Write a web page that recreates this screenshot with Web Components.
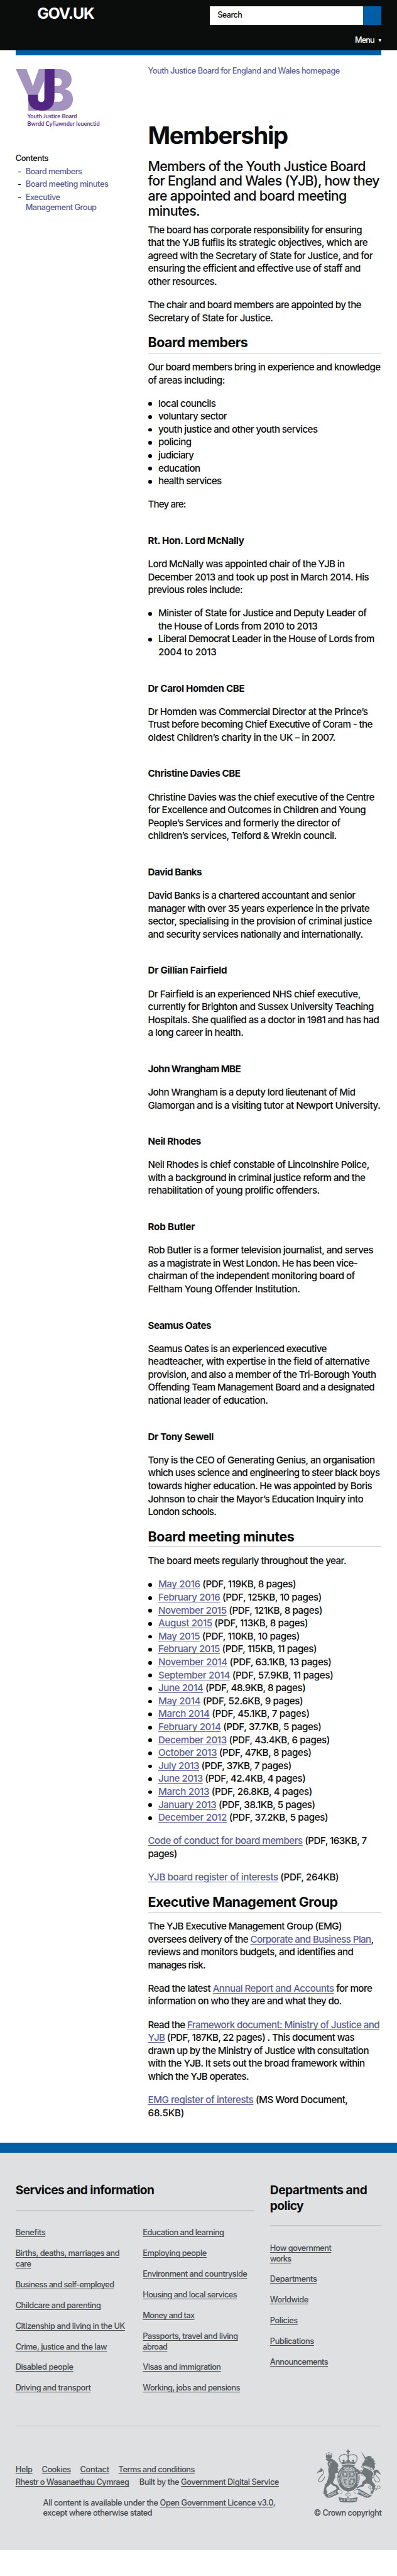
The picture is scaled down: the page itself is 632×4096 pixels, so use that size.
<!DOCTYPE html>
<html lang="en">
<head>
<meta charset="utf-8">
<title>Membership - Youth Justice Board for England and Wales - GOV.UK</title>
<style>
/* 1rem = 10 design pixels */
html { font-size: 8.2348px; }
body { margin: 0; background: #fff; color: #0b0c0c; font-family: Inter, "Noto Sans", sans-serif; font-weight: 450; overflow-x: hidden; }
main { display: grid; grid-template-columns: 25.6rem 1fr; padding: 0 3rem 4.5rem; }
article { display: block; padding-top: 2.02rem; }
</style>
</head>
<body>
<gov-header></gov-header>
<main>
  <org-side></org-side>
  <article>
    <page-intro></page-intro>
    <gov-speak></gov-speak>
  </article>
</main>
<gov-footer></gov-footer>

<script>
const SCALE = 632 / 768;

/* One line of copy, tracked to a set measure (design pixels). */
class FitLine extends HTMLElement {
  connectedCallback() {
    if (!this.shadowRoot) {
      this.attachShadow({ mode: 'open' }).innerHTML = `<style>
        :host{display:block;white-space:nowrap}
        ::slotted(a){color:var(--link,#5c5f98);text-decoration:underline;text-decoration-thickness:1px;text-underline-offset:.13em;text-decoration-skip-ink:none}
        </style><span><slot></slot></span>`;
    }
    const span = this.shadowRoot.querySelector('span');
    const want = parseFloat(this.getAttribute('w')) * SCALE;
    const got = span.getBoundingClientRect().width;
    const n = this.textContent.length;
    if (want && got) span.style.letterSpacing = ((want - got) / n).toFixed(4) + 'px';
  }
}
customElements.define('fit-line', FitLine);

const line = ([w, t]) => `<fit-line w="${w}">${t}</fit-line>`;
const A = t => `<a>${t}</a>`;

customElements.define('gov-header', class extends HTMLElement {
  connectedCallback() {
    this.attachShadow({ mode: 'open' }).innerHTML = `<style>
      :host{display:block;color:#fff}
      .bar{background:#0b0c0c;height:9.7rem;padding:0 3rem;display:grid;grid-template-columns:1fr 33.2rem;align-items:start}
      .brand{padding:1.1rem 0 0 4.2rem;font:700 3rem/3rem Inter,sans-serif}
      form{display:grid;grid-template-columns:29.6rem 3.5rem;gap:.1rem;height:3.6rem;margin-top:1.2rem}
      .q{background:#fff;color:#0b0c0c;padding:.75rem 0 0 1.5rem;font-size:1.55rem;line-height:2rem}
      .go{background:#005ea5}
      .right{display:flex;flex-direction:column}
      .menu{display:flex;justify-content:flex-end;gap:.7rem;align-items:center;font-size:1.55rem;line-height:2rem;margin-top:2rem;font-weight:500}
      .menu svg{width:.7rem;height:.6rem}
      .rule{height:1rem;background:#005ea5;margin:0 3rem}
      </style>
      <div class="bar"><div class="brand"><fit-line w="110">GOV.UK</fit-line></div>
        <div class="right"><form><div class="q"><fit-line w="47.5">Search</fit-line></div><div class="go"></div></form>
        <div class="menu"><fit-line w="37.5">Menu</fit-line><svg viewBox="0 0 7 6"><path d="M.5 0h6L3.5 6z" fill="#fff"/></svg></div></div>
      </div><div class="rule"></div>`;
  }
});

customElements.define('org-side', class extends HTMLElement {
  connectedCallback() {
    const nav = [[[109,'Board members']],[[160,'Board meeting minutes']],[[66.6,'Executive'],[137,'Management Group']]];
    this.attachShadow({ mode: 'open' }).innerHTML = `<style>
      :host{display:block;padding-top:2.7rem}
      svg{display:block;width:11.2rem;height:8.1rem;overflow:visible}
      .name{margin-left:2.28rem;color:#522583;font:600 1.12rem/1.35rem Lato,"Noto Sans",sans-serif;padding-top:.3rem}
      nav{font-size:1.55rem;line-height:2rem;padding-top:5.12rem}
      ul{list-style:none;margin:.53rem 0 0;padding:0;display:flex;flex-direction:column;gap:.5rem;color:#5c5f98}
      li{display:grid;grid-template-columns:1.55rem 1fr;padding-left:.4rem}
      li>i{font-style:normal;color:#0b0c0c}
      </style>
      <svg viewBox="0 0 112 81" font-family="Inter" font-weight="900" font-size="100">
        <text fill="#a593bf" data-box="0 0 66 80">Y</text>
        <text fill="#a593bf" data-box="54 0 111 80">B</text>
        <text fill="#522583" data-box="23 0 75 80.3">J</text>
      </svg>
      <div class="name"><fit-line w="96">Youth Justice Board</fit-line><fit-line w="140">Bwrdd Cyfiawnder Ieuenctid</fit-line></div>
      <nav><fit-line w="63.7">Contents</fit-line><ul>${nav.map(n=>`<li><i>-</i><div>${n.map(line).join('')}</div></li>`).join('')}</ul></nav>`;
    /* stretch each initial so its ink fills its box */
    const c = document.createElement('canvas').getContext('2d');
    c.font = '900 100px Inter';
    for (const t of this.shadowRoot.querySelectorAll('text')) {
      const [x0,y0,x1,y1] = t.dataset.box.split(' ').map(Number);
      const m = c.measureText(t.textContent);
      const l = -m.actualBoundingBoxLeft, r = m.actualBoundingBoxRight, a = m.actualBoundingBoxAscent, d = m.actualBoundingBoxDescent;
      const sx = (x1-x0)/(r-l), sy = (y1-y0)/(a+d);
      t.setAttribute('transform', `translate(${x0-l*sx} ${y0+a*sy}) scale(${sx} ${sy})`);
    }
  }
});

customElements.define('page-intro', class extends HTMLElement {
  connectedCallback() {
    this.attachShadow({ mode: 'open' }).innerHTML = `<style>
      :host{display:block}
      .crumb{font-size:1.55rem;line-height:2rem;color:#5c5f98}
      h1{font-size:4.65rem;line-height:5rem;margin:8.95rem 0 2.01rem;font-weight:700}
      .lead{font-size:2.6rem;line-height:2.89rem;margin:0 0 .96rem;position:static}
      </style>
      <div class="crumb"><fit-line w="371">Youth Justice Board for England and Wales homepage</fit-line></div>
      <h1><fit-line w="270">Membership</fit-line></h1>
      <div class="lead">${[[420.7,'Members of the Youth Justice Board'],[447.7,'for England and Wales (YJB), how they'],[384,'are appointed and board meeting'],[100,'minutes.']].map(line).join('')}</div>`;
  }
});

/* Body copy: blocks of [tag, ...lines] */
const BODY = [
 ['p',[413.9,'The board has corporate responsibility for ensuring'],[425,'that the YJB fulfils its strategic objectives, which are'],[434.4,'agreed with the Secretary of State for Justice, and for'],[411,'ensuring the efficient and effective use of staff and'],[133.2,'other resources.']],
 ['p',[412.4,'The chair and board members are appointed by the'],[241.5,'Secretary of State for Justice.']],
 ['h2',[193,'Board members']],
 ['p',[449.6,'Our board members bring in experience and knowledge'],[148.4,'of areas including:']],
 ['ul',[[111,'local councils']],[[132.7,'voluntary sector']],[[308,'youth justice and other youth services']],[[64,'policing']],[[68.6,'judiciary']],[[81,'education']],[[122,'health services']]],
 ['p',[73,'They are:']],
 ['h3',[186,'Rt. Hon. Lord McNally']],
 ['p',[380.3,'Lord McNally was appointed chair of the YJB in'],[427.3,'December 2013 and took up post in March 2014. His'],[183,'previous roles include:']],
 ['ul',[[402.7,'Minister of State for Justice and Deputy Leader of'],[307.7,'the House of Lords from 2010 to 2013']],[[418,'Liberal Democrat Leader in the House of Lords from'],[112.3,'2004 to 2013']]],
 ['h3',[187,'Dr Carol Homden CBE']],
 ['p',[425.3,'Dr Homden was Commercial Director at the Prince’s'],[434,'Trust before becoming Chief Executive of Coram - the'],[362.7,'oldest Children’s charity in the UK – in 2007.']],
 ['h3',[178.7,'Christine Davies CBE']],
 ['p',[438,'Christine Davies was the chief executive of the Centre'],[421.3,'for Excellence and Outcomes in Children and Young'],[372,'People’s Services and formerly the director of'],[364.7,'children’s services, Telford &amp; Wrekin council.']],
 ['h3',[104,'David Banks']],
 ['p',[401,'David Banks is a chartered accountant and senior'],[428.3,'manager with over 35 years experience in the private'],[433,'sector, specialising in the provision of criminal justice'],[415.7,'and security services nationally and internationally.']],
 ['h3',[153,'Dr Gillian Fairfield']],
 ['p',[411,'Dr Fairfield is an experienced NHS chief executive,'],[436.7,'currently for Brighton and Sussex University Teaching'],[447,'Hospitals. She qualified as a doctor in 1981 and has had'],[184.3,'a long career in health.']],
 ['h3',[179.3,'John Wrangham MBE']],
 ['p',[401,'John Wrangham is a deputy lord lieutenant of Mid'],[449.3,'Glamorgan and is a visiting tutor at Newport University.']],
 ['h3',[102.7,'Neil Rhodes']],
 ['p',[428,'Neil Rhodes is chief constable of Lincolnshire Police,'],[420.3,'with a background in criminal justice reform and the'],[332,'rehabilitation of young prolific offenders.']],
 ['h3',[91,'Rob Butler']],
 ['p',[435.7,'Rob Butler is a former television journalist, and serves'],[405.3,'as a magistrate in West London. He has been vice-'],[400,'chairman of the independent monitoring board of'],[294,'Feltham Young Offender Institution.']],
 ['h3',[122,'Seamus Oates']],
 ['p',[345.3,'Seamus Oates is an experienced executive'],[428.7,'headteacher, with expertise in the field of alternative'],[441,'provision, and also a member of the Tri-Borough Youth'],[438,'Offending Team Management Board and a designated'],[232,'national leader of education.']],
 ['h3',[127,'Dr Tony Sewell']],
 ['p',[438.7,'Tony is the CEO of Generating Genius, an organisation'],[448.3,'which uses science and engineering to steer black boys'],[433.3,'towards higher education. He was appointed by Boris'],[416.3,'Johnson to chair the Mayor’s Education Inquiry into'],[132,'London schools.']],
 ['h2',[283,'Board meeting minutes']],
 ['p',[383.3,'The board meets regularly throughout the year.']],
 ['ul',...[[937,'May 2016','119KB, 8'],[1085,'February 2016','125KB, 10'],[1090,'November 2015','121KB, 8'],[1006,'August 2015','113KB, 8'],[958,'May 2015','110KB, 10'],[1057,'February 2015','115KB, 11'],[1142,'November 2014','63.1KB, 13'],[1153,'September 2014','57.9KB, 11'],[992,'June 2014','48.9KB, 8'],[977,'May 2014','52.6KB, 9'],[1015,'March 2014','45.1KB, 7'],[1084,'February 2014','37.7KB, 5'],[1133,'December 2013','43.4KB, 6'],[1026,'October 2013','47KB, 8'],[910,'July 2013','37KB, 7'],[992,'June 2013','42.4KB, 4'],[1031,'March 2013','26.8KB, 4'],[1048,'January 2013','38.1KB, 5'],[1123,'December 2012','37.2KB, 5']].map(([e,n,s])=>[[(e-138)/3,`${A(n)} (PDF, ${s} pages)`]])],
 ['p',[423,A('Code of conduct for board members')+' (PDF, 163KB, 7'],[56,'pages)']],
 ['p',[369,A('YJB board register of interests')+' (PDF, 264KB)']],
 ['h2',[367,'Executive Management Group']],
 ['p',[374.7,'The YJB Executive Management Group (EMG)'],[436.3,'oversees delivery of the '+A('Corporate and Business Plan')+','],[397,'reviews and monitors budgets, and identifies and'],[111,'manages risk.']],
 ['p',[433.7,'Read the latest '+A('Annual Report and Accounts')+' for more'],[374.7,'information on who they are and what they do.']],
 ['p',[447.7,'Read the '+A('Framework document: Ministry of Justice and')],[399.3,A('YJB')+' (PDF, 187KB, 22 pages) . This document was'],[427,'drawn up by the Ministry of Justice with consultation'],[419.3,'with the YJB. It sets out the broad framework within'],[195,'which the YJB operates.']],
 ['p',[386.3,A('EMG register of interests')+' (MS Word Document,'],[70.3,'68.5KB)']]
];

customElements.define('gov-speak', class extends HTMLElement {
  connectedCallback() {
    this.attachShadow({ mode: 'open' }).innerHTML = `<style>
      :host{display:flex;flex-direction:column;font-size:1.84rem;line-height:2.5rem}
      p,ul,h2,h3{margin:0;font-size:1.84rem}
      p+p,p+ul,ul+p,h3+p{margin-top:2rem}
      h3{margin-top:4.5rem;font-weight:700}
      h2{margin:1.96rem 0 1.5rem;padding-bottom:.44rem;border-bottom:1px solid #bfc1c3;font-size:2.6rem;line-height:2.98rem;font-weight:700}
      ul{list-style:none;padding:0}
      li{display:grid;grid-template-columns:2rem 1fr}
      li::before{content:"";width:.7rem;height:.7rem;border-radius:50%;background:#0b0c0c;margin:.95rem 0 0 .05rem}
      </style>` + BODY.map(([tag, ...rows]) => `<${tag}>${tag === 'ul'
        ? rows.map(r => `<li><div>${r.map(line).join('')}</div></li>`).join('')
        : rows.map(line).join('')}</${tag}>`).join('');
  }
});

customElements.define('link-column', class extends HTMLElement {
  connectedCallback() {
    const items = JSON.parse(this.getAttribute('items'));
    this.attachShadow({ mode: 'open' }).innerHTML = `<style>
      :host{display:flex;flex-direction:column;gap:2rem;font-size:1.55rem;line-height:2rem}
      </style>` + items.map(i => `<div>${i.map(([w,t]) => line([w, A(t)])).join('')}</div>`).join('');
  }
});

customElements.define('royal-crest', class extends HTMLElement {
  connectedCallback() {
    this.attachShadow({ mode: 'open' }).innerHTML = `<style>:host{display:block}svg{display:block;width:100%;height:100%;overflow:visible}</style>
    <svg viewBox="69 57 375 306" fill="#6f777b" stroke="none">
      <g>
        <path d="M122 97l5-14 7 8 6-10 7 10 7-8 5 14-4 11h-29z" />
        <circle cx="140" cy="76" r="4"/><circle cx="125" cy="82" r="3.500"/><circle cx="155" cy="82" r="3.500"/>
        <path d="M121 112q18-9 40 1l12 7 20 20 2 18-5 3 6 12-5 4 8 16-13-2-10 6 2 20-8 16-6 14 8 10 12 2 12 12 8 18-14 3-6-8-2-12-14-4-18-14-10 12-12 9-4 14 8 12-4 12 12 9-16 2-8-8-8-3 2-16 4-20 4-18 10-12 8-24 4-22-4-24 4-20-6-9-2-14 6-6z"/>
        <path d="M117 214q-14 32-30 30-10-4-4-17 11-18 23-28 6-14-2-24-6-8-15-8" fill="none" stroke="#6f777b" stroke-width="4"/>
        <path d="M69 196q8-16 16-18 8-4 10-14 12 4 8 16-4 10-16 8-8 0-18 8z"/>
        <path d="M128 126l10 3M149 131l11-2M145 134l-3 11 10 2" stroke="#dee0e2" stroke-width="3" fill="none"/>
      </g>
      <g>
        <path d="M247 57h10v7h6v8h-6v12h-9v-12h-6v-8h5z"/>
        <path d="M213 137q-20-28-8-42 22-18 42-4l5 10 6-10q26-13 43 5 10 15-11 41" fill="none" stroke="#6f777b" stroke-width="6" stroke-dasharray="5 1.500"/>
        <path d="M252 88v40M226 131v-16M220 121h12M281 131v-16M275 121h12M242 122h20" stroke="#6f777b" stroke-width="6" fill="none"/>
        <path d="M214 131q38-10 78 0l-2 12q-37-9-74 0z"/>
        <path d="M216 147q36-9 74 0l-1 7q-36-9-72 0z"/>
      </g>
      <ellipse cx="254" cy="222" rx="55" ry="67" fill="none" stroke="#6f777b" stroke-width="20"/>
      <ellipse cx="254" cy="222" rx="41" ry="52" fill="#c0c4c6" stroke="#6f777b" stroke-width="3"/>
      <path d="M226 186h20v26h-26zM262 186h20l7 26h-27zM262 230h27q-4 20-14 30h-13z" fill="none" stroke="#6f777b" stroke-width="9" stroke-dasharray="6 2"/>
      <path d="M225 230h20v32q-20-10-20-32M231 232v22M238 232v28" fill="none" stroke="#6f777b" stroke-width="3"/>
      <path d="M254 172v99M214 221h80" stroke="#dee0e2" stroke-width="6"/><path d="M254 172v99M214 221h80" stroke="#6f777b" stroke-width="3"/>
      <path id="garter" d="M208 262A53 65 0 1 1 300 262" fill="none"/>
      <text font-family="Liberation Sans" font-weight="700" font-size="15" fill="#dee0e2"><textPath href="#garter" textLength="240" startOffset="6">HONI SOIT QUI MAL Y PENSE</textPath></text>
      <g>
        <path d="M326 64l30 43-7 5z"/>
        <path d="M350 111l8-12 12-6 8 1 10 4-1 8 14 5-4 7 10 4-3 10 7 7-6 6 3 15-9 15-18-3-20-10-6-12-14 3-9-3 2-12 10-10z"/>
        <path d="M340 158l45 20 12 14 2 22-10 14 2 12 12 14 8 12-6 20-10 26-15 3 8-26 4-16-14-14-18-6-12 5-8 12-22 6-14 8-4-8 14-8 16-8 6-18 16-12 4-10-14-14-12-10-16 2-8-12-14-10 4-8 14 4 10 10 14-2 6-10z"/>
        <path d="M399 212q6 36 26 32 14-3 8-14-4-10-18-22-10-14 0-26 8-8 18-6" fill="none" stroke="#6f777b" stroke-width="4"/>
        <path d="M398 182q14-16 26-4 12 8 19 26-16-14-28-15-4 14-12 20z"/>
        <path d="M350 152l45 17" stroke="#dee0e2" stroke-width="9"/><path d="M350 150l46 17" stroke="#6f777b" stroke-width="5" stroke-dasharray="4 2"/>
        <g fill="#dee0e2" stroke="#6f777b" stroke-width="3"><circle cx="335" cy="157" r="6"/><circle cx="327" cy="184" r="6"/><circle cx="332" cy="202" r="5"/><circle cx="396" cy="211" r="6"/><circle cx="377" cy="275" r="7"/><circle cx="389" cy="290" r="7"/><circle cx="412" cy="286" r="6"/><circle cx="429" cy="276" r="9"/></g>
        <path d="M352 116l7-2" stroke="#dee0e2" stroke-width="3"/>
      </g>
      <g>
        <path d="M108 312q8 12 20 6l58-32 22 4-6 22-54 24q-20 6-40-24z"/>
        <path d="M396 312q-8 12-20 6l-58-32-22 4 6 22 54 24q20 6 40-24z"/>
        <path d="M194 309q-10-12-2-20 14-4 24 7 6 12-12 18M309 309q10-12 2-20-14-4-24 7-6 12 12 18" fill="#dee0e2" stroke="#6f777b" stroke-width="3"/>
        <path d="M196 333q56 12 112 0l-8 26q-48 9-96 0z"/>
        <path d="M252 296l5 12-2 8q8-9 12 0 0 8-8 8l-3 2v10h-8v-10l-4-2q-8 0-8-8 6-9 13 0l-3-8z" fill="none" stroke="#6f777b" stroke-width="3"/>
        <g font-family="Liberation Sans" font-weight="700" font-size="19" fill="#dee0e2">
          <text x="208" y="357" textLength="88">ET MON</text>
          <text transform="translate(140 332) rotate(-27)" textLength="50">DIEU</text>
          <text transform="translate(311 305) rotate(28)" textLength="64">DROIT</text>
        </g>
      </g>
    </svg>`;
  }
});

customElements.define('gov-footer', class extends HTMLElement {
  connectedCallback() {
    const c1=[[[57.8,'Benefits']],[[201,'Births, deaths, marriages and'],[30,'care']],[[190.5,'Business and self-employed']],[[165,'Childcare and parenting']],[[211.6,'Citizenship and living in the UK']],[[176.8,'Crime, justice and the law']],[[111.7,'Disabled people']],[[145.5,'Driving and transport']]];
    const c2=[[[157,'Education and learning']],[[123.4,'Employing people']],[[201.8,'Environment and countryside']],[[182,'Housing and local services']],[[100,'Money and tax']],[[184,'Passports, travel and living'],[47.5,'abroad']],[[151,'Visas and immigration']],[[188,'Working, jobs and pensions']]];
    const c3=[[[118.5,'How government'],[40.7,'works']],[[90.6,'Departments']],[[74,'Worldwide']],[[53.4,'Policies']],[[85,'Publications']],[[112,'Announcements']]];
    const col = c => `<link-column items='${JSON.stringify(c)}'></link-column>`;
    this.attachShadow({ mode: 'open' }).innerHTML = `<style>
      :host{display:block;background:#dee0e2;border-top:2rem solid #005ea5;padding:5.7rem 3rem 6.15rem;margin-bottom:5rem;color:#454a4d;--link:#454a4d;font-size:1.55rem;line-height:2rem}
      .top{display:grid;grid-template-columns:46.2rem 1fr;gap:3rem;padding-bottom:6.15rem;border-bottom:1px solid #bfc1c3}
      h2{margin:0 0 3.35rem;padding-bottom:2.3rem;border-bottom:1px solid #bfc1c3;font-size:2.33rem;line-height:3rem;color:#0b0c0c}
      .two{display:grid;grid-template-columns:24.6rem 1fr}
      .meta{display:grid;grid-template-columns:1fr 13.1rem}
      .left{padding-top:7.45rem}
      .row{display:flex;gap:1.8rem;height:2.4rem}
      .row.b{gap:2rem;height:2rem}
      .lic{margin:2rem 0 0 5.33rem}
      .right{padding-top:4.5rem}
      royal-crest{width:12.5rem;height:10.2rem;margin:0 0 1.15rem .6rem}
      </style>
      <div class="top">
        <section><h2><fit-line w="268">Services and information</fit-line></h2><div class="two">${col(c1)}${col(c2)}</div></section>
        <section><h2><fit-line w="187.6">Departments and</fit-line><fit-line w="64.7">policy</fit-line></h2>${col(c3)}</section>
      </div>
      <div class="meta">
        <div class="left">
          <div class="row">${[[32.8,'Help'],[56,'Cookies'],[56.3,'Contact'],[147.4,'Terms and conditions']].map(([w,t])=>line([w,A(t)])).join('')}</div>
          <div class="row b">${line([219.4,A('Rhestr o Wasanaethau Cymraeg')])}${line([270,'Built by the '+A('Government Digital Service')])}</div>
          <div class="lic">${line([449,'All content is available under the '+A('Open Government Licence v3.0')+','])}${line([211,'except where otherwise stated'])}</div>
        </div>
        <div class="right"><royal-crest></royal-crest>${line([131,'© Crown copyright'])}</div>
      </div>`;
  }
});
</script>
</body>
</html>
